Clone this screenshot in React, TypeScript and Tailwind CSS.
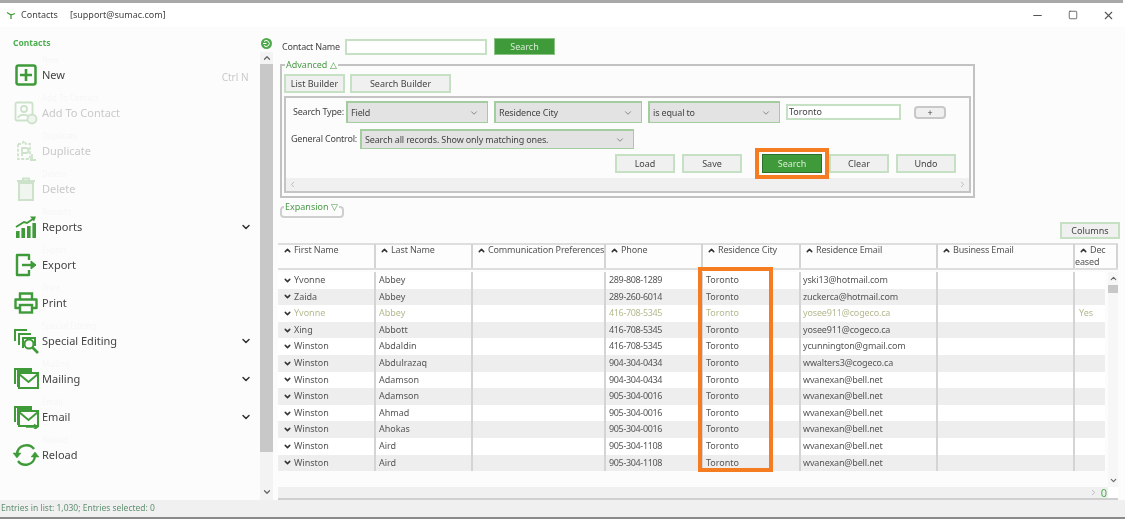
import React from "react";
import { ChevronDown, ChevronUp, ChevronLeft, ChevronRight, Minus, Square, X } from "lucide-react";

const G = "#3f9a3a";

function IconNew() {
  return (
    <svg width="22" height="22" viewBox="0 0 22 22" fill="none" stroke={G}>
      <rect x="1.5" y="1.5" width="19" height="19" rx="2" strokeWidth="2.5" />
      <path d="M11 5v12M5 11h12" strokeWidth="2.6" />
    </svg>
  );
}
function IconAdd() {
  return (
    <svg width="24" height="24" viewBox="0 0 24 24" fill="none" stroke={G} strokeWidth="1.8">
      <rect x="1.5" y="1.5" width="17" height="18" rx="1.5" />
      <circle cx="10" cy="8" r="3" />
      <path d="M4 17c1-4 9-4 12-1" />
      <circle cx="18" cy="18" r="4.5" fill="#cfe4cc" />
    </svg>
  );
}
function IconDuplicate() {
  return (
    <svg width="24" height="24" viewBox="0 0 24 24" fill="none" stroke={G} strokeWidth="1.8">
      <path d="M4 5h4l2-3 2 3h4v15H4z" strokeDasharray="3 1.5" />
      <path d="M8 17V9h4a2 2 0 0 1 0 5H8" />
      <path d="M18 15v6M16 21h6" />
    </svg>
  );
}
function IconDelete() {
  return (
    <svg width="20" height="24" viewBox="0 0 20 24" fill="none" stroke={G} strokeWidth="2">
      <path d="M1 4h18M7 4V1.5h6V4" />
      <rect x="3" y="6" width="14" height="17" fill="#cfe4cc" />
    </svg>
  );
}
function IconReports() {
  return (
    <svg width="22" height="24" viewBox="0 0 22 24" fill={G}>
      <rect x="1" y="16" width="3.6" height="7" rx=".5" />
      <rect x="6.4" y="13" width="3.6" height="10" rx=".5" />
      <rect x="12" y="11" width="3.6" height="12" rx=".5" />
      <rect x="17.4" y="8" width="3.6" height="15" rx=".5" />
      <path d="M1 12 9 7l3 1 6-4" fill="none" stroke={G} strokeWidth="2" />
      <path d="M15 1.5h6l-2 5z" />
    </svg>
  );
}
function IconExport() {
  return (
    <svg width="22" height="24" viewBox="0 0 22 24" fill="none" stroke={G} strokeWidth="2.4">
      <path d="M14 7V2H2v20h12v-5" strokeLinejoin="round" />
      <path d="M7 12h11" />
      <path d="M16 8l5 4-5 4z" fill={G} strokeWidth="1" />
    </svg>
  );
}
function IconPrint() {
  return (
    <svg width="24" height="22" viewBox="0 0 24 22" fill="none" stroke={G} strokeWidth="2.4">
      <path d="M6 7V1.5h12V7" />
      <path d="M5 16H1.5V7.5h21V16H19" strokeLinejoin="round" />
      <rect x="6" y="13" width="12" height="7.5" />
    </svg>
  );
}
function IconSpecial() {
  return (
    <svg width="26" height="26" viewBox="0 0 26 26" fill="none" stroke={G} strokeWidth="2">
      <path d="M2 13V2h12" />
      <path d="M6 17V6h12" />
      <path d="M10 20V10h12v8" />
      <circle cx="16" cy="16" r="4.5" fill="#fcfcfc" />
      <path d="M19 19l6 6" strokeWidth="2.6" />
    </svg>
  );
}
function IconMail({ arrow }: { arrow?: boolean }) {
  return (
    <svg width="26" height="24" viewBox="0 0 26 24" fill="none" stroke={G} strokeWidth="2">
      <path d="M2 17V2h17" />
      <path d="M5 20V4h14" />
      <rect x="6" y="6" width="19" height="15" fill="#fcfcfc" />
      <path d="M6 7l9.500 8L25 7" />
      {arrow && <path d="M13 22h11M21 19.500l3.500 2.500-3.500 2.500" strokeWidth="1.6" />}
    </svg>
  );
}
function IconReload() {
  return (
    <svg width="28" height="24" viewBox="0 0 28 24" fill="none" stroke={G} strokeWidth="2.4">
      <path d="M5 11a9.500 9.500 0 0 1 17-5" />
      <path d="M23 13a9.500 9.500 0 0 1-17 5" />
      <path d="M1 10h8l-4 5z" fill={G} strokeWidth=".5" />
      <path d="M19 14h8l-4-5z" fill={G} strokeWidth=".5" />
    </svg>
  );
}

const menu: { label: string; icon: React.ReactNode; off?: boolean; chev?: boolean; short?: string }[] = [
  { label: "New", icon: <IconNew />, short: "Ctrl N" },
  { label: "Add To Contact", icon: <IconAdd />, off: true },
  { label: "Duplicate", icon: <IconDuplicate />, off: true },
  { label: "Delete", icon: <IconDelete />, off: true },
  { label: "Reports", icon: <IconReports />, chev: true },
  { label: "Export", icon: <IconExport /> },
  { label: "Print", icon: <IconPrint /> },
  { label: "Special Editing", icon: <IconSpecial />, chev: true },
  { label: "Mailing", icon: <IconMail />, chev: true },
  { label: "Email", icon: <IconMail arrow />, chev: true },
  { label: "Reload", icon: <IconReload /> },
];

const rows = [
  ["Yvonne", "Abbey", "289-808-1289", "yski13@hotmail.com"],
  ["Zaida", "Abbey", "289-260-6014", "zuckerca@hotmail.com"],
  ["Yvonne", "Abbey", "416-708-5345", "yosee911@cogeco.ca"],
  ["Xing", "Abbott", "416-708-5345", "yosee911@cogeco.ca"],
  ["Winston", "Abdaldin", "416-708-5345", "ycunnington@gmail.com"],
  ["Winston", "Abdulrazaq", "904-304-0434", "wwalters3@cogeco.ca"],
  ["Winston", "Adamson", "904-304-0434", "wvanexan@bell.net"],
  ["Winston", "Adamson", "905-304-0016", "wvanexan@bell.net"],
  ["Winston", "Ahmad", "905-304-0016", "wvanexan@bell.net"],
  ["Winston", "Ahokas", "905-304-0016", "wvanexan@bell.net"],
  ["Winston", "Aird", "905-304-1108", "wvanexan@bell.net"],
  ["Winston", "Aird", "905-304-1108", "wvanexan@bell.net"],
];

const headers = ["First Name", "Last Name", "Communication Preferences", "Phone", "Residence City", "Residence Email", "Business Email", "Deceased"];

function Btn({ children, className = "" }: { children: React.ReactNode; className?: string }) {
  return (
    <button className={"flex items-center justify-center border-2 border-[#c6e0c3] bg-[#f0f0f0] text-[9px] text-[#444] " + className}>
      {children}
    </button>
  );
}

function Sel({ text, className = "" }: { text: string; className?: string }) {
  return (
    <div className={"flex items-center justify-between border border-l-2 border-t-2 border-[#a3cd9f] bg-[#e3e3e3] pl-[3px] pr-2 text-[9px] tracking-[-0.15px] text-[#444] " + className}>
      <span>{text}</span>
      <ChevronDown size={10} className="text-[#777]" />
    </div>
  );
}

export default function App() {
  return (
    <div className="flex h-[519px] w-[1125px] flex-col overflow-hidden bg-[#fcfcfc] blur-[0.45px] [font-family:'Noto_Sans',sans-serif]">
      <div className="h-[3px] w-[1123px] shrink-0 bg-[#a8a8a8]" />

      {/* Title bar */}
      <div className="flex h-[24px] shrink-0 items-center bg-white pl-[6px] pr-[10px] text-[9px] text-[#444]">
        <svg width="10" height="8" viewBox="0 0 10 8" fill="none" stroke={G} strokeWidth="1.3">
          <path d="M5 8V3M5 4 1 1.500M5 4l4-1.500" />
        </svg>
        <span className="ml-[5px] w-[49px]">Contacts</span>
        <span>[support@sumac.com]</span>
        <div className="ml-auto flex items-center gap-[24px] text-[#555]">
          <Minus size={13} />
          <Square size={10} strokeWidth={2} />
          <X size={13} />
        </div>
      </div>

      {/* Main */}
      <div className="flex min-h-0 flex-1">
        {/* Sidebar */}
        <div className="w-[260px] shrink-0">
          <div className="flex h-[29px] items-center pl-[13px] pt-[4px] text-[8.5px] font-bold text-[#4caf50]">Contacts</div>
          {menu.map((m) => (
            <div key={m.label} className="flex h-[38px] items-center pr-[8.5px]">
              <div className={"flex w-[42px] shrink-0 justify-center pl-[9px] " + (m.off ? "opacity-25" : "")}>{m.icon}</div>
              <div className="flex h-[38px] flex-col">
                <div className="h-[8px] text-[8px] leading-[8px] text-[#f6f6f6]">{m.label}</div>
                <div className={"h-[22px] text-[11px] leading-[22px] " + (m.off ? "text-[#c9c9c9]" : "text-[#444]")}>{m.label}</div>
              </div>
              <div className="ml-auto">
                {m.short && <span className="mr-[3px] text-[10px] text-[#c9c9c9]">{m.short}</span>}
                {m.chev && <ChevronDown size={12} strokeWidth={3} className="text-[#333]" />}
              </div>
            </div>
          ))}
        </div>

        {/* Sidebar scroll column */}
        <div className="flex w-[13px] shrink-0 flex-col items-center">
          <svg width="11" height="11" viewBox="0 0 11 11" fill="none" className="mt-[11px] shrink-0">
            <circle cx="5.5" cy="5.500" r="5.500" fill="#4fa94b" />
            <path d="M3 3.500a3 3 0 1 1 0 4M5.500 5.500H2" stroke="#fff" strokeWidth="1" />
          </svg>
          <div className="mt-[3px] flex w-full flex-1 flex-col items-center bg-[#f3f3f3]">
            <ChevronUp size={10} strokeWidth={3} className="h-[12px] text-[#666]" />
            <div className="w-full flex-1 bg-[#c8c8c8]" />
            <div className="h-[34px] shrink-0" />
            <ChevronDown size={10} strokeWidth={3} className="mb-[2px] h-[12px] text-[#666]" />
          </div>
        </div>

        {/* Content */}
        <div className="ml-[5px] flex min-w-0 flex-1 flex-col pr-[5px] pt-[11px]">
          <div className="flex h-[17px] shrink-0 items-center">
            <span className="ml-[4px] w-[63px] whitespace-nowrap text-[9px] tracking-[-0.2px] text-[#444]">Contact Name</span>
            <div className="h-[16px] w-[142px] border-2 border-[#c6e0c3] bg-white" />
            <button className="ml-[7px] flex h-[17px] w-[61px] items-center justify-center border border-[#8cc488] bg-[#3f9a3a] text-[9px] text-[#d8ecd6]">Search</button>
          </div>

          <fieldset className="ml-[2px] mt-[4px] h-[139px] w-[695px] shrink-0 border-2 border-[#c2c2c2] px-[2px] pb-[3px]">
            <legend className="ml-[1px] px-[1px] text-[9px] leading-[12px] text-[#4a9a46]">Advanced △</legend>
            <div className="mt-[3px] flex gap-[5px]">
              <Btn className="h-[19px] w-[61px]">List Builder</Btn>
              <Btn className="h-[19px] w-[101px]">Search Builder</Btn>
            </div>
            <div className="mt-[3px] flex h-[97px] w-[687px] flex-col border-2 border-[#c4c4c4]">
              <div className="mt-[3px] flex h-[22px] items-center pl-[7px]">
                <span className="w-[53px] whitespace-nowrap text-[9px] tracking-[-0.2px] text-[#444]">Search Type:</span>
                <Sel text="Field" className="h-[22px] w-[142px]" />
                <Sel text="Residence City" className="ml-[6px] h-[22px] w-[148px]" />
                <Sel text="is equal to" className="ml-[6px] h-[22px] w-[132px]" />
                <div className="ml-[6px] flex h-[16px] w-[115px] items-center border-2 border-[#c6e0c3] bg-white pl-px text-[9px] text-[#444]">Toronto</div>
                <div className="ml-[13px] flex h-[13px] w-[32px] items-center justify-center rounded-sm border-2 border-[#c8c8c8] bg-[#f0f0f0] text-[9px] leading-none text-[#444]">+</div>
              </div>
              <div className="mt-[6px] flex h-[20px] items-center pl-[5px]">
                <span className="w-[69px] whitespace-nowrap text-[9px] tracking-[-0.2px] text-[#444]">General Control:</span>
                <Sel text="Search all records. Show only matching ones." className="h-[20px] w-[274px]" />
              </div>
              <div className="mt-[5px] flex justify-end gap-[7px] pr-[13px]">
                <Btn className="h-[19px] w-[60px]">Load</Btn>
                <Btn className="h-[19px] w-[60px]">Save</Btn>
                <div className="relative ml-[13px]">
                  <button className="flex h-[19px] w-[60px] items-center justify-center border border-[#2d6e2a] bg-[#3f9a3a] text-[9px] text-[#d8ecd6]">Search</button>
                  <div className="absolute inset-x-[-7px] inset-y-[-6px] border-4 border-[#f57c20]" />
                </div>
                <Btn className="h-[19px] w-[60px]">Clear</Btn>
                <Btn className="h-[19px] w-[60px]">Undo</Btn>
              </div>
              <div className="mt-auto flex h-[13px] items-center justify-between bg-[#f0f0f0] px-[2px] text-[#aaa]">
                <ChevronLeft size={9} />
                <ChevronRight size={9} />
              </div>
            </div>
          </fieldset>

          <fieldset className="ml-[2px] mt-[3px] h-[17px] w-[64px] shrink-0 rounded-sm border-2 border-[#cfcfcf]">
            <legend className="ml-[2px] px-[1px] text-[9px] leading-[12px] text-[#4a9a46]">Expansion ▽</legend>
          </fieldset>

          <Btn className="ml-auto mt-[4px] h-[17px] w-[60px] shrink-0">Columns</Btn>

          {/* Table */}
          <div className="mt-[4px] flex w-[840px] shrink-0 flex-col text-[9px] text-[#555]">
            <div className="grid h-[27px] grid-cols-[98px_97px_133px_97px_98px_137px_137px_43px] border-y-2 border-[#dedede] bg-[#fdfdfd] tracking-[-0.15px]">
              {headers.map((h, i) => (
                <div key={h} className={"-mt-px border-r-2 border-[#d4d4d4] leading-[12px] " + (i === 0 ? "pl-[5px] " : "pl-[4px] ") + (i === 7 ? "border-r-0" : "")}>
                  <span className="flex h-[12px] items-center gap-[2px] whitespace-nowrap">
                    <ChevronUp size={9} strokeWidth={4} className="shrink-0 text-[#333]" />
                    {i === 7 ? "Dec" : h}
                  </span>
                  {i === 7 && <div className="-ml-[4px]">eased</div>}
                </div>
              ))}
            </div>
            <div className="flex h-[217px] pt-[2px]">
              <div className="w-[827px]">
                {rows.map((r, i) => {
                  const dim = i === 2;
                  return (
                    <div
                      key={i}
                      className={
                        "grid h-[16.6px] grid-cols-[98px_97px_133px_97px_98px_137px_137px_30px] leading-[16.6px] " +
                        (i % 2 ? "bg-[#eeeeee] " : "bg-white ") +
                        (dim ? "text-[#b5b98f]" : "text-[#555]")
                      }
                    >
                      <div className="flex items-center gap-[2px] border-r-2 border-[#d4d4d4] pl-[5px]">
                        <ChevronDown size={9} strokeWidth={4} className="text-[#333]" />
                        {r[0]}
                      </div>
                      <div className="border-r-2 border-[#d4d4d4] pl-[3px]">{r[1]}</div>
                      <div className="border-r-2 border-[#d4d4d4]" />
                      <div className="border-r-2 border-[#d4d4d4] pl-[3px] tracking-[-0.35px]">{r[2]}</div>
                      <div className="border-r-2 border-[#d4d4d4] pl-[3px]">Toronto</div>
                      <div className="border-r-2 border-[#d4d4d4] pl-[2px] tracking-[-0.15px]">{r[3]}</div>
                      <div className="border-r-2 border-[#d4d4d4]" />
                      <div className="pl-[4px]">{dim ? "Yes" : ""}</div>
                    </div>
                  );
                })}
              </div>
              <div className="ml-[3px] flex w-[12px] flex-col items-center bg-[#f7f7f7] text-[#666]">
                <ChevronUp size={9} strokeWidth={3} className="mt-[2px]" />
                <div className="mt-[2px] h-[8px] w-full bg-[#c8c8c8]" />
                <ChevronDown size={9} strokeWidth={3} className="mb-[2px] mt-auto" />
              </div>
            </div>
          </div>

          <div className="flex h-[13px] w-[840px] shrink-0 items-center justify-end border-b-2 border-[#cfcfcf] bg-[#f0f0f0]">
            <ChevronRight size={9} className="text-[#aaa]" />
            <span className="ml-[3px] text-[11px] leading-none text-[#4caf50]">0</span>
            <div className="ml-[1px] h-full w-[10px] bg-white" />
          </div>
        </div>
      </div>

      {/* Status */}
      <div className="flex h-[17px] shrink-0 items-center bg-[#f0f0f0] pl-px text-[8.5px] text-[#5f8f6f]">
        Entries in list: 1,030; Entries selected: 0
      </div>
      <div className="h-[2px] shrink-0 bg-[#8a8a8a]" />

      {/* Annotation around the Residence City column */}
      <div className="pointer-events-none absolute left-[698px] top-[267px] h-[205px] w-[75px] border-4 border-[#f57c20]" />
    </div>
  );
}
